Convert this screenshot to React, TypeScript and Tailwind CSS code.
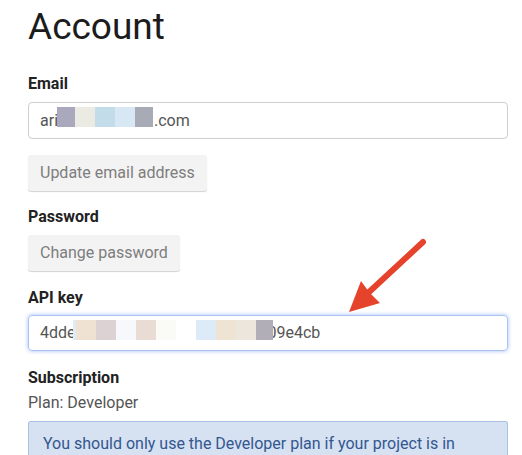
import React from "react"

const font = { fontFamily: "Roboto, 'Liberation Sans', sans-serif" }

function Blocks({ colors }: { colors: [string, number][] }) {
    return (
        <span className="inline-flex items-center">
            {colors.map(([c, w], i) => (
                <span key={i} className={`inline-block h-[20px] ${c}`} style={{ width: w }} />
            ))}
        </span>
    )
}

export default function App() {
    return (
        <div className="relative h-[455px] w-[522px] overflow-hidden bg-white text-[#222]" style={font}>
            <div className="px-7">
                <h1 className="mt-[5px] h-11 text-[37px] font-normal leading-[44px] text-[#1c1c1c]">Account</h1>

                <div className="mt-[25px] text-base font-bold leading-5">Email</div>
                <div className="mt-2 flex h-[37px] w-[480px] items-center rounded border border-[#cfcfcf] px-[11px] text-base text-[#555]">
                    <span>ari</span>
                    <span className="-ml-px">
                        <Blocks
                            colors={[
                                ["bg-[#a9a8bd]", 18],
                                ["bg-[#ecebe3]", 20],
                                ["bg-[#c3dcea]", 20],
                                ["bg-[#d8e7f4]", 20],
                                ["bg-[#a8abb5]", 18],
                            ]}
                        />
                    </span>
                    <span className="ml-px">.com</span>
                </div>

                <button className="mt-4 h-9 rounded-[3px] bg-[#f3f3f3] px-3 text-base text-[#7d7d7d] shadow-[0_1px_1px_rgba(0,0,0,0.18)]">
                    Update email address
                </button>

                <div className="mt-4 text-base font-bold leading-5">Password</div>
                <button className="mt-2 h-9 rounded-[3px] bg-[#f3f3f3] px-3 text-base text-[#7d7d7d] shadow-[0_1px_1px_rgba(0,0,0,0.18)]">
                    Change password
                </button>

                <div className="mt-[17px] text-base font-bold leading-5">API key</div>
                <div className="mt-[7px] flex h-9 w-[480px] items-center rounded border border-[#a9c2f2] px-[11px] text-base text-[#555] shadow-[0_0_4px_rgba(90,140,235,0.55)]">
                    <span>4dde</span>
                    <span className="relative z-10 -ml-[3px]">
                        <Blocks
                            colors={[
                                ["bg-[#dfecf8]", 3],
                                ["bg-[#f0e2d3]", 20],
                                ["bg-[#ddd2d3]", 20],
                                ["bg-[#f7f8fb]", 20],
                                ["bg-[#e8dcd4]", 20],
                                ["bg-[#fafaf6]", 20],
                                ["bg-white", 20],
                                ["bg-[#ddebf8]", 20],
                                ["bg-[#efe3d4]", 20],
                                ["bg-[#ede6dc]", 20],
                                ["bg-[#b2aeb8]", 17],
                            ]}
                        />
                    </span>
                    <span className="-ml-[5px]">09e4cb</span>
                </div>

                <div className="mt-[17px] text-base font-bold leading-5">Subscription</div>
                <div className="mt-[5px] text-base leading-5 text-[#555]">Plan: Developer</div>

                <div className="mt-2 w-[480px] rounded-t-[3px] border border-b-0 border-[#a9c0e6] bg-[#d6e1f2] px-[14px] pb-6 pt-3 text-base leading-5 text-[#33578f]">
                    You should only use the Developer plan if your project is in
                </div>
            </div>

            {/* annotation arrow */}
            <svg className="pointer-events-none absolute left-0 top-0" width="522" height="455">
                <line x1="423" y1="242" x2="368" y2="293" stroke="#e5432b" strokeWidth="6" strokeLinecap="round" />
                <polygon points="349,312 361,281 369,292 380,303" fill="#e5432b" />
            </svg>
        </div>
    )
}
